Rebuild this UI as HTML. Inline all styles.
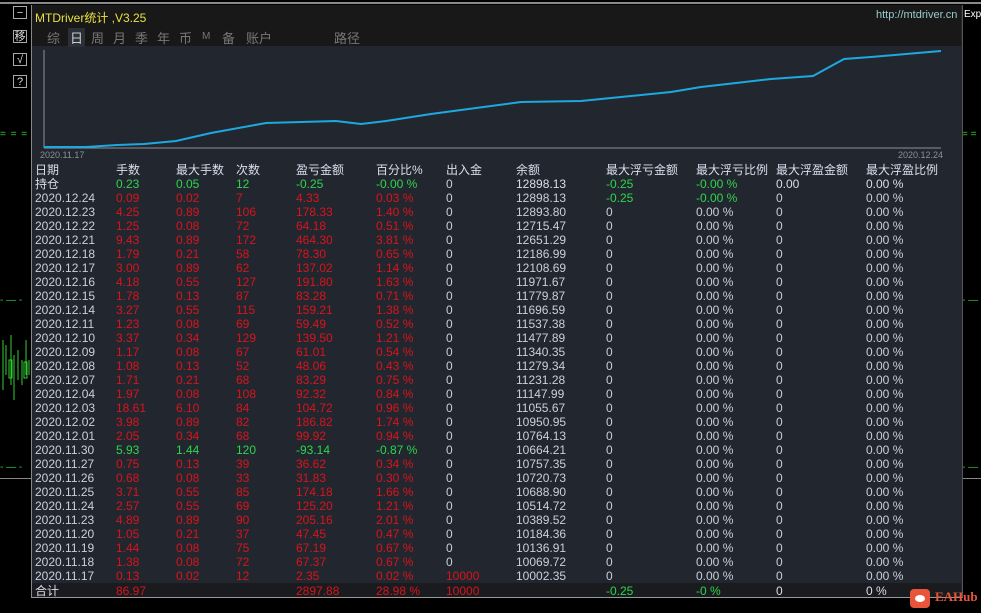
<!DOCTYPE html>
<html><head><meta charset="utf-8"><style>
body{margin:0;width:981px;height:613px;background:#000;position:relative;overflow:hidden;font-family:"Liberation Sans","Noto Sans CJK SC",sans-serif;font-size:12px;}
.btn{position:absolute;left:13px;width:14px;height:13px;border:1px solid #aaa;color:#ddd;font-size:11px;line-height:13px;text-align:center;box-sizing:border-box}
#panel{position:absolute;left:31px;top:5px;width:930px;height:592px;background:#22272f;border-left:1px solid #888;border-bottom:1px solid #999;border-right:1px solid #555}
#top{position:absolute;left:0;top:0;width:929px;height:41px;background:#181818}
.tab{position:absolute;top:23px;color:#777;font-size:13px}
.r{position:absolute;left:0;width:929px;height:14px;line-height:14px;color:#c8d0dc}
.r span{position:absolute;white-space:nowrap}
.r span:nth-child(1){left:3px}.r span:nth-child(2){left:84px}.r span:nth-child(3){left:144px}.r span:nth-child(4){left:204px}
.r span:nth-child(5){left:264px}.r span:nth-child(6){left:344px}.r span:nth-child(7){left:414px}.r span:nth-child(8){left:484px}
.r span:nth-child(9){left:574px}.r span:nth-child(10){left:664px}.r span:nth-child(11){left:744px}.r span:nth-child(12){left:834px}
.d span:nth-child(n+2):nth-child(-n+6){color:#d8141c}
.g span:nth-child(n+2):nth-child(-n+6){color:#2fd44d}
.h{color:#dde}
</style></head><body>
<div style="position:absolute;left:0;top:2px;width:981px;height:2px;background:#888"></div>
<div class="btn" style="top:6px">−</div>
<div class="btn" style="top:30px">移</div>
<div class="btn" style="top:53px">√</div>
<div class="btn" style="top:75px">?</div>
<div style="position:absolute;left:0;top:129px;color:#3c3;font-size:10px;letter-spacing:1px">= = =</div>
<div style="position:absolute;left:0;top:295px;color:#3c3;font-size:10px">- — -</div>
<div style="position:absolute;left:0;top:462px;color:#3c3;font-size:10px">- — -</div>
<div style="position:absolute;left:0;top:478px;width:31px;height:1px;background:#888"></div>
<svg style="position:absolute;left:0;top:335px" width="31" height="80"><g stroke="#3c3" fill="none"><line x1="3" y1="5" x2="3" y2="55"/><line x1="6" y1="10" x2="6" y2="40"/><line x1="11" y1="0" x2="11" y2="50"/><line x1="14" y1="20" x2="14" y2="65"/><line x1="18" y1="15" x2="18" y2="45"/><line x1="22" y1="25" x2="22" y2="50"/><line x1="26" y1="5" x2="26" y2="40"/><line x1="29" y1="25" x2="29" y2="40"/><rect x="9" y="25" width="3" height="18"/><rect x="24" y="27" width="3" height="16"/></g></svg>
<div style="position:absolute;left:964px;top:9px;color:#fff;font-size:10px">Expe</div>
<div style="position:absolute;left:962px;top:129px;color:#3c3;font-size:10px">= =</div>
<div style="position:absolute;left:962px;top:295px;color:#3c3;font-size:10px">- —</div>
<div style="position:absolute;left:962px;top:462px;color:#3c3;font-size:10px">- —</div>
<div style="position:absolute;left:962px;top:478px;width:19px;height:1px;background:#888"></div>

<div id="panel">
<div id="top">
<div style="position:absolute;left:3px;top:4px;color:#e8e040;font-size:12px">MTDriver统计 ,V3.25</div>
<div style="position:absolute;left:844px;top:4px;color:#9cc;font-size:11px">http://mtdriver.cn</div>
<span class="tab" style="left:15px">综</span>
<span class="tab" style="left:36px;color:#ccc;background:#2a2f38;padding:0 2px">日</span>
<span class="tab" style="left:59px">周</span><span class="tab" style="left:81px">月</span><span class="tab" style="left:103px">季</span><span class="tab" style="left:125px">年</span><span class="tab" style="left:147px">币</span><span class="tab" style="left:170px;font-size:10px;top:26px">M</span><span class="tab" style="left:190px">备</span><span class="tab" style="left:214px">账户</span><span class="tab" style="left:302px">路径</span>
</div>
<svg style="position:absolute;left:0;top:41px" width="929" height="118">
<line x1="12" y1="4" x2="12" y2="102" stroke="#8a8f98"/>
<line x1="12" y1="102" x2="909" y2="102" stroke="#8a8f98"/>
<polyline fill="none" stroke="#1ea8e0" stroke-width="2" points="12,101 54,101 85,99 112,98 144,95 179,87 234,77 269,76 304,75 329,78 354,75 399,68 429,64 489,56 549,55 569,53 599,50 639,46 669,41 704,37 739,33 781,30 812,13 839,11 874,8 909,5"/>
<text x="8" y="112" fill="#8a8f98" font-size="9">2020.11.17</text>
<text x="866" y="112" fill="#8a8f98" font-size="9">2020.12.24</text>
</svg>
<div class="r h" style="top:158px"><span>日期</span><span>手数</span><span>最大手数</span><span>次数</span><span>盈亏金额</span><span>百分比%</span><span>出入金</span><span>余额</span><span>最大浮亏金额</span><span>最大浮亏比例</span><span>最大浮盈金额</span><span>最大浮盈比例</span></div>
<div class="r g h" style="top:172px"><span>持仓</span><span>0.23</span><span>0.05</span><span>12</span><span>-0.25</span><span>-0.00 %</span><span style="color:#c8d0dc">0</span><span>12898.13</span><span style="color:#2fd44d">-0.25</span><span style="color:#2fd44d">-0.00 %</span><span>0.00</span><span>0.00 %</span></div>
<div class="r d" style="top:186px"><span>2020.12.24</span><span>0.09</span><span>0.02</span><span>7</span><span>4.33</span><span>0.03 %</span><span>0</span><span>12898.13</span><span style="color:#2fd44d">-0.25</span><span style="color:#2fd44d">-0.00 %</span><span>0</span><span>0.00 %</span></div>
<div class="r d" style="top:200px"><span>2020.12.23</span><span>4.25</span><span>0.89</span><span>106</span><span>178.33</span><span>1.40 %</span><span>0</span><span>12893.80</span><span>0</span><span>0.00 %</span><span>0</span><span>0.00 %</span></div>
<div class="r d" style="top:214px"><span>2020.12.22</span><span>1.25</span><span>0.08</span><span>72</span><span>64.18</span><span>0.51 %</span><span>0</span><span>12715.47</span><span>0</span><span>0.00 %</span><span>0</span><span>0.00 %</span></div>
<div class="r d" style="top:228px"><span>2020.12.21</span><span>9.43</span><span>0.89</span><span>172</span><span>464.30</span><span>3.81 %</span><span>0</span><span>12651.29</span><span>0</span><span>0.00 %</span><span>0</span><span>0.00 %</span></div>
<div class="r d" style="top:242px"><span>2020.12.18</span><span>1.79</span><span>0.21</span><span>58</span><span>78.30</span><span>0.65 %</span><span>0</span><span>12186.99</span><span>0</span><span>0.00 %</span><span>0</span><span>0.00 %</span></div>
<div class="r d" style="top:256px"><span>2020.12.17</span><span>3.00</span><span>0.89</span><span>62</span><span>137.02</span><span>1.14 %</span><span>0</span><span>12108.69</span><span>0</span><span>0.00 %</span><span>0</span><span>0.00 %</span></div>
<div class="r d" style="top:270px"><span>2020.12.16</span><span>4.18</span><span>0.55</span><span>127</span><span>191.80</span><span>1.63 %</span><span>0</span><span>11971.67</span><span>0</span><span>0.00 %</span><span>0</span><span>0.00 %</span></div>
<div class="r d" style="top:284px"><span>2020.12.15</span><span>1.78</span><span>0.13</span><span>87</span><span>83.28</span><span>0.71 %</span><span>0</span><span>11779.87</span><span>0</span><span>0.00 %</span><span>0</span><span>0.00 %</span></div>
<div class="r d" style="top:298px"><span>2020.12.14</span><span>3.27</span><span>0.55</span><span>115</span><span>159.21</span><span>1.38 %</span><span>0</span><span>11696.59</span><span>0</span><span>0.00 %</span><span>0</span><span>0.00 %</span></div>
<div class="r d" style="top:312px"><span>2020.12.11</span><span>1.23</span><span>0.08</span><span>69</span><span>59.49</span><span>0.52 %</span><span>0</span><span>11537.38</span><span>0</span><span>0.00 %</span><span>0</span><span>0.00 %</span></div>
<div class="r d" style="top:326px"><span>2020.12.10</span><span>3.37</span><span>0.34</span><span>129</span><span>139.50</span><span>1.21 %</span><span>0</span><span>11477.89</span><span>0</span><span>0.00 %</span><span>0</span><span>0.00 %</span></div>
<div class="r d" style="top:340px"><span>2020.12.09</span><span>1.17</span><span>0.08</span><span>67</span><span>61.01</span><span>0.54 %</span><span>0</span><span>11340.35</span><span>0</span><span>0.00 %</span><span>0</span><span>0.00 %</span></div>
<div class="r d" style="top:354px"><span>2020.12.08</span><span>1.08</span><span>0.13</span><span>52</span><span>48.06</span><span>0.43 %</span><span>0</span><span>11279.34</span><span>0</span><span>0.00 %</span><span>0</span><span>0.00 %</span></div>
<div class="r d" style="top:368px"><span>2020.12.07</span><span>1.71</span><span>0.21</span><span>68</span><span>83.29</span><span>0.75 %</span><span>0</span><span>11231.28</span><span>0</span><span>0.00 %</span><span>0</span><span>0.00 %</span></div>
<div class="r d" style="top:382px"><span>2020.12.04</span><span>1.97</span><span>0.08</span><span>108</span><span>92.32</span><span>0.84 %</span><span>0</span><span>11147.99</span><span>0</span><span>0.00 %</span><span>0</span><span>0.00 %</span></div>
<div class="r d" style="top:396px"><span>2020.12.03</span><span>18.61</span><span>6.10</span><span>84</span><span>104.72</span><span>0.96 %</span><span>0</span><span>11055.67</span><span>0</span><span>0.00 %</span><span>0</span><span>0.00 %</span></div>
<div class="r d" style="top:410px"><span>2020.12.02</span><span>3.98</span><span>0.89</span><span>82</span><span>186.82</span><span>1.74 %</span><span>0</span><span>10950.95</span><span>0</span><span>0.00 %</span><span>0</span><span>0.00 %</span></div>
<div class="r d" style="top:424px"><span>2020.12.01</span><span>2.05</span><span>0.34</span><span>68</span><span>99.92</span><span>0.94 %</span><span>0</span><span>10764.13</span><span>0</span><span>0.00 %</span><span>0</span><span>0.00 %</span></div>
<div class="r g" style="top:438px"><span>2020.11.30</span><span>5.93</span><span>1.44</span><span>120</span><span>-93.14</span><span>-0.87 %</span><span>0</span><span>10664.21</span><span>0</span><span>0.00 %</span><span>0</span><span>0.00 %</span></div>
<div class="r d" style="top:452px"><span>2020.11.27</span><span>0.75</span><span>0.13</span><span>39</span><span>36.62</span><span>0.34 %</span><span>0</span><span>10757.35</span><span>0</span><span>0.00 %</span><span>0</span><span>0.00 %</span></div>
<div class="r d" style="top:466px"><span>2020.11.26</span><span>0.68</span><span>0.08</span><span>33</span><span>31.83</span><span>0.30 %</span><span>0</span><span>10720.73</span><span>0</span><span>0.00 %</span><span>0</span><span>0.00 %</span></div>
<div class="r d" style="top:480px"><span>2020.11.25</span><span>3.71</span><span>0.55</span><span>85</span><span>174.18</span><span>1.66 %</span><span>0</span><span>10688.90</span><span>0</span><span>0.00 %</span><span>0</span><span>0.00 %</span></div>
<div class="r d" style="top:494px"><span>2020.11.24</span><span>2.57</span><span>0.55</span><span>69</span><span>125.20</span><span>1.21 %</span><span>0</span><span>10514.72</span><span>0</span><span>0.00 %</span><span>0</span><span>0.00 %</span></div>
<div class="r d" style="top:508px"><span>2020.11.23</span><span>4.89</span><span>0.89</span><span>90</span><span>205.16</span><span>2.01 %</span><span>0</span><span>10389.52</span><span>0</span><span>0.00 %</span><span>0</span><span>0.00 %</span></div>
<div class="r d" style="top:522px"><span>2020.11.20</span><span>1.05</span><span>0.21</span><span>37</span><span>47.45</span><span>0.47 %</span><span>0</span><span>10184.36</span><span>0</span><span>0.00 %</span><span>0</span><span>0.00 %</span></div>
<div class="r d" style="top:536px"><span>2020.11.19</span><span>1.44</span><span>0.08</span><span>75</span><span>67.19</span><span>0.67 %</span><span>0</span><span>10136.91</span><span>0</span><span>0.00 %</span><span>0</span><span>0.00 %</span></div>
<div class="r d" style="top:550px"><span>2020.11.18</span><span>1.38</span><span>0.08</span><span>72</span><span>67.37</span><span>0.67 %</span><span>0</span><span>10069.72</span><span>0</span><span>0.00 %</span><span>0</span><span>0.00 %</span></div>
<div class="r d" style="top:564px"><span>2020.11.17</span><span>0.13</span><span>0.02</span><span>12</span><span>2.35</span><span>0.02 %</span><span style="color:#d8141c">10000</span><span>10002.35</span><span>0</span><span>0.00 %</span><span>0</span><span>0.00 %</span></div>
<div style="position:absolute;left:0;top:578px;width:929px;height:14px;background:#1a1b1e"></div>
<div class="r d h" style="top:579px"><span>合计</span><span>86.97</span><span></span><span></span><span>2897.88</span><span>28.98 %</span><span style="color:#d8141c">10000</span><span></span><span style="color:#2fd44d">-0.25</span><span style="color:#2fd44d">-0 %</span><span>0</span><span>0 %</span></div>
</div>
<div style="position:absolute;left:910px;top:589px;width:20px;height:19px;background:#e8553a;border-radius:4px"></div>
<div style="position:absolute;left:915px;top:595px;width:10px;height:7px;background:#fff;border-radius:50%"></div>
<div style="position:absolute;left:935px;top:589px;color:#e8553a;font-weight:bold;font-size:13px;font-family:'Liberation Serif',serif">EAHub</div>
</body></html>
